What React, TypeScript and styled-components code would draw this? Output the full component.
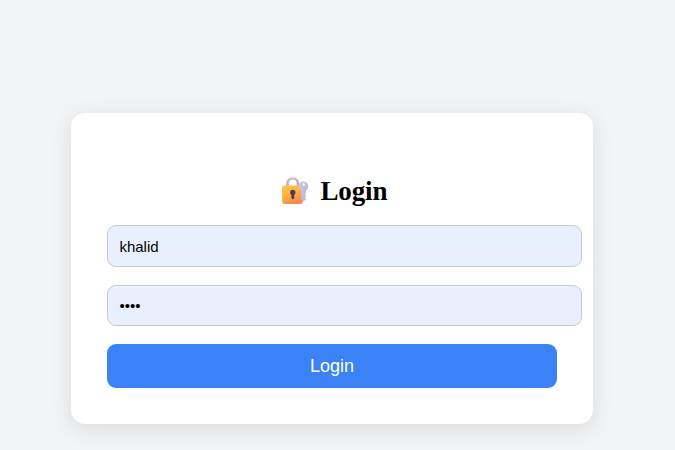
import React from "react";
import styled, { createGlobalStyle } from "styled-components";

const GlobalStyle = createGlobalStyle`
  * { box-sizing: border-box; }
  body { margin: 0; background: #f3f4f6; }
`;

const Page = styled.main`
  height: 450px;
  padding: 113px 0 0 71px;
  overflow: hidden;
  background: #f3f4f6;
`;

const Card = styled.form`
  display: flex;
  flex-direction: column;
  width: 522px;
  height: 311px;
  padding: 62px 36px 36px;
  border-radius: 14px;
  background: #fff;
  box-shadow: 0 4.5px 22.5px rgba(0, 0, 0, 0.1);
`;

const Title = styled.h2`
  display: flex;
  align-items: center;
  height: 32px;
  margin: 0 0 18px 172px;
  font: bold 27px/32px "Liberation Serif", "Times New Roman", serif;
  color: #000;
`;

const TitleText = styled.span`
  margin-left: 7.5px;
  letter-spacing: -0.15px;
`;

const Lock = styled.svg`
  width: 34px;
  height: 32px;
  flex: none;
`;

const Field = styled.input<{ $height: number }>`
  flex: none;
  width: 475px;
  height: ${(p) => p.$height}px;
  margin: 0 0 18px;
  padding: 0 11.4px;
  border: 1px solid #c9cacd;
  border-radius: 9px;
  outline: none;
  background: #e8f0fe;
  color: #000;
  font: 15px "Liberation Sans", Arial, sans-serif;
`;

const SubmitButton = styled.button`
  flex: none;
  width: 450px;
  height: 44px;
  padding: 0;
  border: 0;
  border-radius: 9px;
  background: #3b82f6;
  color: #fff;
  font: 18px "Liberation Sans", Arial, sans-serif;
`;

function LockWithKey() {
  return (
    <Lock viewBox="0 0 34 32" aria-hidden="true">
      <defs>
        <linearGradient id="body" x1="0" y1="0" x2="0.5" y2="1">
          <stop offset="0" stopColor="#ffc83d" />
          <stop offset="0.5" stopColor="#ffb145" />
          <stop offset="1" stopColor="#f98a50" />
        </linearGradient>
        <linearGradient id="shackle" x1="0" y1="0" x2="1" y2="0">
          <stop offset="0" stopColor="#b9b0c0" />
          <stop offset="0.5" stopColor="#cdc5d4" />
          <stop offset="1" stopColor="#b9b0c2" />
        </linearGradient>
        <linearGradient id="key" x1="0" y1="0" x2="1" y2="1">
          <stop offset="0" stopColor="#d0c6dc" />
          <stop offset="1" stopColor="#bfb1d3" />
        </linearGradient>
      </defs>
      <path d="M8.5 13V8.7a5.2 5.2 0 0 1 10.4 0V13" fill="none" stroke="url(#shackle)" strokeWidth="2.6" />
      <rect x="3" y="10.4" width="20.8" height="18.6" rx="3" fill="url(#body)" />
      <path d="M13.8 14.8a2.8 2.8 0 0 0-1.4 5.2v2.8a1.4 1.4 0 0 0 2.8 0V20a2.8 2.8 0 0 0-1.4-5.2Z" fill="#493b50" />
      <path fillRule="evenodd" d="M24.5 6.5a4.8 4.8 0 0 0-2.6 8.9v8.9l2.5 2.2 2.8-2.6-1.3-1.4 1.4-1.4-1.4-1.6 1.1-1.3v-2.8a4.8 4.8 0 0 0-2.5-8.9Zm.2 1.8a1.25 1.25 0 1 1 0 2.5 1.25 1.25 0 0 1 0-2.5Z" fill="url(#key)" />
    </Lock>
  );
}

export default function App() {
  return (
    <>
      <GlobalStyle />
      <Page>
        <Card onSubmit={(e) => e.preventDefault()}>
          <Title>
            <LockWithKey />
            <TitleText>Login</TitleText>
          </Title>
          <Field $height={42} type="text" defaultValue="khalid" aria-label="Username" />
          <Field $height={41} type="password" defaultValue="1234" aria-label="Password" />
          <SubmitButton type="submit">Login</SubmitButton>
        </Card>
      </Page>
    </>
  );
}
